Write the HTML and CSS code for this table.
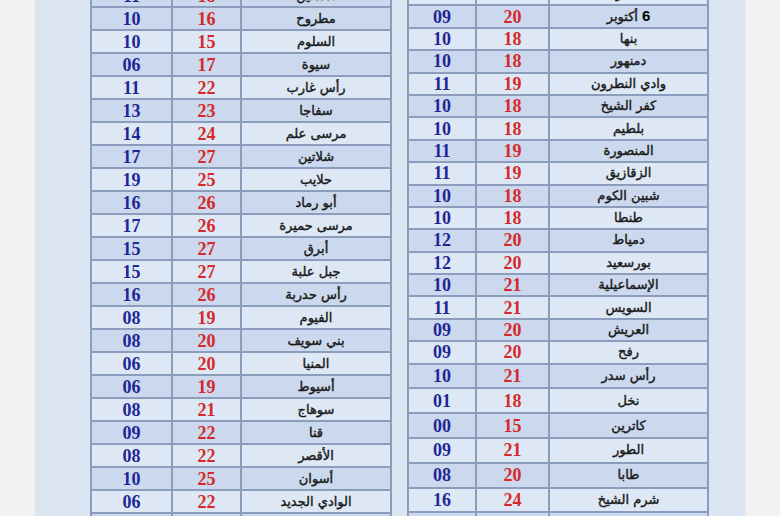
FILE: index.html
```html
<!DOCTYPE html>
<html lang="ar">
<head>
<meta charset="utf-8">
<link rel="stylesheet" href="styles.css">
</head>
<body>
<div class="page">
  <div class="panel">
    <table class="tbl tbl-left">
      <colgroup><col class="c-min-l"><col class="c-max-l"><col class="c-city-l"></colgroup>
      <tr class="d"><td class="mn">11</td><td class="mx">18</td><td class="ct">العلمين</td></tr>
      <tr class="d"><td class="mn">10</td><td class="mx">16</td><td class="ct">مطروح</td></tr>
      <tr class="l"><td class="mn">10</td><td class="mx">15</td><td class="ct">السلوم</td></tr>
      <tr class="d"><td class="mn">06</td><td class="mx">17</td><td class="ct">سيوة</td></tr>
      <tr class="l"><td class="mn">11</td><td class="mx">22</td><td class="ct">رأس غارب</td></tr>
      <tr class="d"><td class="mn">13</td><td class="mx">23</td><td class="ct">سفاجا</td></tr>
      <tr class="l"><td class="mn">14</td><td class="mx">24</td><td class="ct">مرسى علم</td></tr>
      <tr class="d"><td class="mn">17</td><td class="mx">27</td><td class="ct">شلاتين</td></tr>
      <tr class="l"><td class="mn">19</td><td class="mx">25</td><td class="ct">حلايب</td></tr>
      <tr class="d"><td class="mn">16</td><td class="mx">26</td><td class="ct">أبو رماد</td></tr>
      <tr class="l"><td class="mn">17</td><td class="mx">26</td><td class="ct">مرسى حميرة</td></tr>
      <tr class="d"><td class="mn">15</td><td class="mx">27</td><td class="ct">أبرق</td></tr>
      <tr class="l"><td class="mn">15</td><td class="mx">27</td><td class="ct">جبل علبة</td></tr>
      <tr class="d"><td class="mn">16</td><td class="mx">26</td><td class="ct">رأس حدربة</td></tr>
      <tr class="l"><td class="mn">08</td><td class="mx">19</td><td class="ct">الفيوم</td></tr>
      <tr class="d"><td class="mn">08</td><td class="mx">20</td><td class="ct">بني سويف</td></tr>
      <tr class="l"><td class="mn">06</td><td class="mx">20</td><td class="ct">المنيا</td></tr>
      <tr class="d"><td class="mn">06</td><td class="mx">19</td><td class="ct">أسيوط</td></tr>
      <tr class="l"><td class="mn">08</td><td class="mx">21</td><td class="ct">سوهاج</td></tr>
      <tr class="d"><td class="mn">09</td><td class="mx">22</td><td class="ct">قنا</td></tr>
      <tr class="l"><td class="mn">08</td><td class="mx">22</td><td class="ct">الأقصر</td></tr>
      <tr class="d"><td class="mn">10</td><td class="mx">25</td><td class="ct">أسوان</td></tr>
      <tr class="l"><td class="mn">06</td><td class="mx">22</td><td class="ct">الوادي الجديد</td></tr>
      <tr class="d"><td class="mn">12</td><td class="mx">24</td><td class="ct">أبو سمبل</td></tr>
    </table>
    <table class="tbl tbl-right">
      <colgroup><col class="c-min-r"><col class="c-max-r"><col class="c-city-r"></colgroup>
      <tr class="l"><td class="mn">11</td><td class="mx">20</td><td class="ct">القاهرة</td></tr>
      <tr class="d"><td class="mn">09</td><td class="mx">20</td><td class="ct"><span class="pair"><b class="num">6</b><span>أكتوبر</span></span></td></tr>
      <tr class="l"><td class="mn">10</td><td class="mx">18</td><td class="ct">بنها</td></tr>
      <tr class="d"><td class="mn">10</td><td class="mx">18</td><td class="ct">دمنهور</td></tr>
      <tr class="l"><td class="mn">11</td><td class="mx">19</td><td class="ct">وادي النطرون</td></tr>
      <tr class="d"><td class="mn">10</td><td class="mx">18</td><td class="ct">كفر الشيخ</td></tr>
      <tr class="l"><td class="mn">10</td><td class="mx">18</td><td class="ct">بلطيم</td></tr>
      <tr class="d"><td class="mn">11</td><td class="mx">19</td><td class="ct">المنصورة</td></tr>
      <tr class="l"><td class="mn">11</td><td class="mx">19</td><td class="ct">الزقازيق</td></tr>
      <tr class="d"><td class="mn">10</td><td class="mx">18</td><td class="ct">شبين الكوم</td></tr>
      <tr class="l"><td class="mn">10</td><td class="mx">18</td><td class="ct">طنطا</td></tr>
      <tr class="d"><td class="mn">12</td><td class="mx">20</td><td class="ct">دمياط</td></tr>
      <tr class="l"><td class="mn">12</td><td class="mx">20</td><td class="ct">بورسعيد</td></tr>
      <tr class="d"><td class="mn">10</td><td class="mx">21</td><td class="ct">الإسماعيلية</td></tr>
      <tr class="l"><td class="mn">11</td><td class="mx">21</td><td class="ct">السويس</td></tr>
      <tr class="d"><td class="mn">09</td><td class="mx">20</td><td class="ct">العريش</td></tr>
      <tr class="l"><td class="mn">09</td><td class="mx">20</td><td class="ct">رفح</td></tr>
      <tr class="d t"><td class="mn">10</td><td class="mx">21</td><td class="ct">رأس سدر</td></tr>
      <tr class="l t"><td class="mn">01</td><td class="mx">18</td><td class="ct">نخل</td></tr>
      <tr class="d t"><td class="mn">00</td><td class="mx">15</td><td class="ct">كاترين</td></tr>
      <tr class="l t"><td class="mn">09</td><td class="mx">21</td><td class="ct">الطور</td></tr>
      <tr class="d t"><td class="mn">08</td><td class="mx">20</td><td class="ct">طابا</td></tr>
      <tr class="l t"><td class="mn">16</td><td class="mx">24</td><td class="ct">شرم الشيخ</td></tr>
      <tr class="d t"><td class="mn">15</td><td class="mx">25</td><td class="ct">الغردقة</td></tr>
    </table>
  </div>
</div>
</body>
</html>
```
FILE: styles.css
```css
html, body {
  margin: 0;
  padding: 0;
  background: #f2f2f2;
  overflow: hidden;
}
.page {
  height: 516px;
  display: flex;
  background: linear-gradient(to right, #f2f2f2 0, #f2f2f2 745px, #f3f1f1 745px);
}
.panel {
  margin-left: 35px;
  width: 710px;
  height: 516px;
  background: #dce6f2;
  display: flex;
  align-items: flex-start;
  overflow: hidden;
}
.tbl {
  border-collapse: collapse;
  table-layout: fixed;
  width: 300px;
}
.tbl-left {
  margin-left: 55px;
  margin-top: -17px;
}
.tbl-right {
  margin-left: 15px;
  margin-top: -18px;
}
.c-min-l { width: 81px; }
.c-max-l { width: 69px; }
.c-city-l { width: 150px; }
.c-min-r { width: 68px; }
.c-max-r { width: 73px; }
.c-city-r { width: 159px; }
.tbl td {
  border: 2px solid #8c9cbd;
  padding: 0;
  text-align: center;
  vertical-align: middle;
}
.tbl-left tr { height: 23px; }
.tbl-right tr { height: 22.4px; }
.tbl-right tr.t { height: 24.8px; }
tr.d td { background: #cbd8ed; }
tr.l td { background: #dee8f5; }
.mn, .mx {
  font-family: "Liberation Serif", "Times New Roman", serif;
  font-weight: bold;
  font-size: 18px;
  line-height: 18px;
}
.mn { color: #1d2795; }
.mx { color: #d42a2b; }
.ct {
  font-family: "DejaVu Sans", "Noto Sans", sans-serif;
  font-size: 13px;
  font-weight: normal;
  -webkit-text-stroke: 0.4px #1a1a1a;
  line-height: 16px;
  color: #1a1a1a;
}
.pair {
  display: inline-flex;
  direction: rtl;
  align-items: baseline;
  gap: 4px;
}
.num {
  font-family: "Liberation Sans", Arial, sans-serif;
  font-weight: bold;
  font-size: 15px;
  color: #000;
  -webkit-text-stroke: 0;
}
```
